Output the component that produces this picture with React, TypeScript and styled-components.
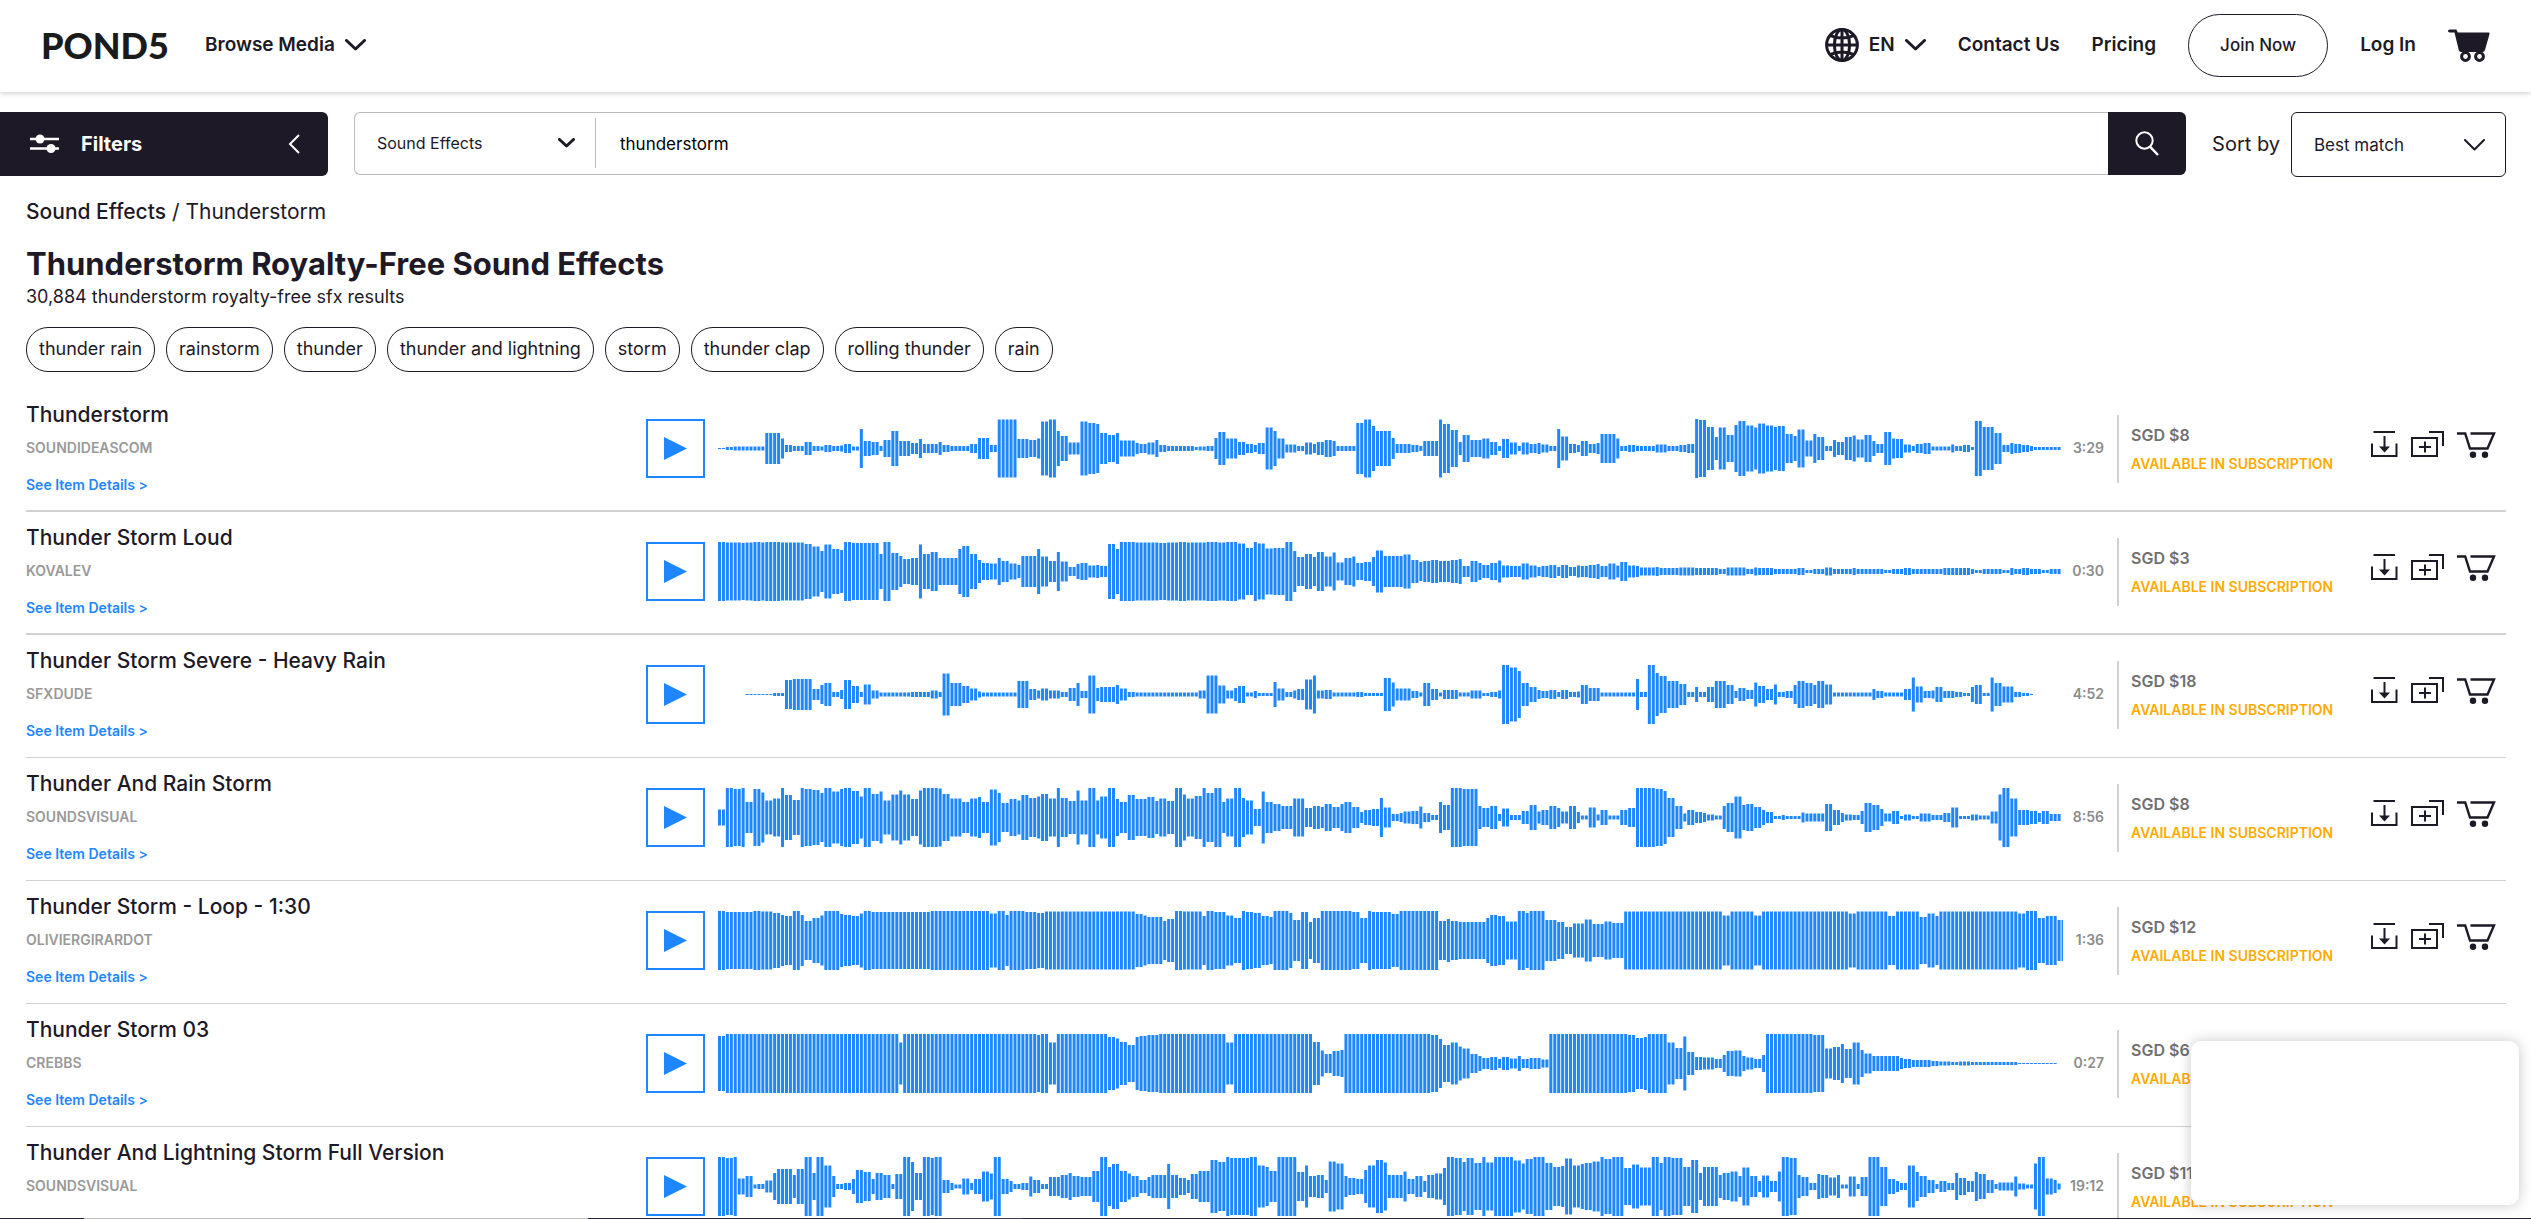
import React from "react";
import styled, { createGlobalStyle } from "styled-components";

const ink = "#1d1926";
const blue = "#1e87ff";
const line = "#d1d1d1";

const GlobalStyle = createGlobalStyle`
  *, *::before, *::after { box-sizing: border-box; }
  body {
    margin: 0;
    background: #fff;
    color: ${ink};
    font-family: Inter, "Open Sans", sans-serif;
    font-size: 17px;
  }
  button, input, select { font: inherit; color: inherit; }
  a { color: inherit; text-decoration: none; }
  h1, h2, p, ul, ol { margin: 0; padding: 0; }
  ul, ol { list-style: none; }
`;

const Page = styled.div`
  height: 100vh;
  overflow-y: auto;
  scrollbar-width: none;
`;

/* Header */

const Header = styled.header`
  display: flex;
  align-items: center;
  justify-content: space-between;
  height: 92px;
  padding: 0 41px 2px;
  box-shadow: 0 1px 5px rgba(0, 0, 0, 0.22);
`;

const HeaderGroup = styled.nav`
  display: flex;
  align-items: center;
  gap: 32px;
`;

const Logo = styled.a`
  min-width: 132px;
  color: #1b1b1b;
  font-family: Lato, sans-serif;
  font-size: 36px;
  font-weight: 900;
  line-height: 40px;
`;

const PlainButton = styled.button`
  display: inline-flex;
  align-items: center;
  gap: 10px;
  padding: 0;
  border: 0;
  background: none;
  font-size: 19px;
  font-weight: 600;
  line-height: 24px;
  cursor: pointer;
`;

const HeaderLink = styled.a`
  font-size: 19px;
  font-weight: 600;
  line-height: 24px;
`;

const JoinButton = styled.button`
  width: 140px;
  height: 63px;
  border: 1px solid ${ink};
  border-radius: 32px;
  background: #fff;
  font-size: 17px;
  font-weight: 500;
  cursor: pointer;
`;

/* Search bar */

const Toolbar = styled.div`
  display: flex;
  align-items: flex-start;
  padding: 20px 25px 0 0;
`;

const FiltersButton = styled.button`
  display: flex;
  align-items: center;
  gap: 22px;
  width: 328px;
  height: 64px;
  margin-right: 26px;
  padding: 0 28px 0 30px;
  border: 0;
  border-radius: 0 6px 6px 0;
  background: ${ink};
  color: #fff;
  font-size: 20px;
  font-weight: 700;
  cursor: pointer;

  svg:last-child { margin-left: auto; }
`;

const SearchForm = styled.form`
  display: flex;
  flex: 1;
  height: 63px;
  border: 1px solid #bbb;
  border-right: 0;
  border-radius: 6px;
`;

const SelectBox = styled.div<{ $width: number; $outlined?: boolean }>`
  position: relative;
  width: ${(p) => p.$width}px;
  height: ${(p) => (p.$outlined ? "65px" : "50px")};
  margin-top: ${(p) => (p.$outlined ? 0 : 5)}px;
  border: ${(p) => (p.$outlined ? `1px solid ${ink}` : "0")};
  border-right: ${(p) => (p.$outlined ? `1px solid ${ink}` : "1px solid #bbb")};
  border-radius: ${(p) => (p.$outlined ? 6 : 0)}px;

  select {
    width: 100%;
    height: 100%;
    padding: 0 48px 0 22px;
    border: 0;
    background: transparent;
    font-size: ${(p) => (p.$outlined ? 17 : 16)}px;
    appearance: none;
  }

  svg {
    position: absolute;
    top: 50%;
    right: 20px;
    transform: translateY(-50%);
    pointer-events: none;
  }
`;

const SearchInput = styled.input`
  flex: 1;
  min-width: 0;
  padding: 0 24px;
  border: 0;
  background: transparent;
  color: #000;
  font-size: 17px;
  outline: none;
`;

const SearchButton = styled.button`
  display: flex;
  align-items: center;
  justify-content: center;
  width: 78px;
  margin: -1px 0;
  border: 0;
  border-radius: 0 6px 6px 0;
  background: ${ink};
  cursor: pointer;
`;

const SortLabel = styled.label`
  margin: 0 11px 0 26px;
  font-size: 20px;
  line-height: 65px;
`;

/* Page intro */

const Main = styled.main`
  padding: 0 25px 0 26px;
`;

const Breadcrumb = styled.nav`
  margin-top: 23px;
  font-size: 21px;
  line-height: 24px;

  a { font-weight: 500; }
`;

const Title = styled.h1`
  margin-top: 20px;
  font-size: 31px;
  font-weight: 700;
  line-height: 40px;
`;

const Count = styled.p`
  margin-top: 1px;
  font-size: 18px;
  line-height: 24px;
`;

const Tags = styled.ul`
  display: flex;
  gap: 11px;
  margin-top: 18px;
`;

const Tag = styled.a`
  display: block;
  height: 45px;
  padding: 0 12px;
  border: 1px solid ${ink};
  border-radius: 22px;
  font-size: 18px;
  line-height: 42px;
`;

/* Results */

const Results = styled.ol`
  margin-top: 17px;
`;

const Row = styled.li<{ $thick: boolean }>`
  display: flex;
  height: 123px;
  border-bottom: ${(p) => (p.$thick ? 2 : 1)}px solid ${line};
`;

const Info = styled.div`
  width: 25%;
  padding-top: 14px;
`;

const TrackTitle = styled.h2`
  font-size: 21px;
  font-weight: 500;
  line-height: 24px;
`;

const Author = styled.a`
  display: block;
  margin-top: 9px;
  color: #999;
  font-size: 14px;
  font-weight: 600;
  line-height: 24px;
`;

const Details = styled.a`
  display: block;
  margin-top: 13px;
  color: ${blue};
  font-size: 14px;
  font-weight: 600;
  line-height: 24px;
`;

const PlayButton = styled.button`
  display: flex;
  align-items: center;
  justify-content: center;
  width: 59px;
  height: 59px;
  margin: 30px 13px 0 0;
  padding: 0;
  border: 2px solid ${blue};
  background: #fff;
  cursor: pointer;
`;

const Wave = styled.svg`
  flex: 1;
  min-width: 0;
  height: 59px;
  margin-top: 30px;
  fill: ${blue};
`;

const Duration = styled.span`
  width: 41px;
  padding-top: 47px;
  color: #8c8c8c;
  font-size: 14px;
  font-weight: 600;
  line-height: 24px;
  text-align: right;
`;

const Price = styled.div`
  width: 254px;
  height: 68px;
  margin: 26px 0 0 13px;
  padding: 8px 0 0 12px;
  border-left: 2px solid ${line};
  color: #707070;
  font-size: 16px;
  font-weight: 600;
  line-height: 24px;
`;

const Subscription = styled.p`
  margin-top: 5px;
  color: #ffab00;
  font-size: 14px;
  font-weight: 600;
  line-height: 24px;
`;

const Actions = styled.div`
  display: flex;
  align-items: flex-start;
  gap: 13px;
  padding: 42px 10px 0 0;
`;

const IconButton = styled.button`
  display: flex;
  padding: 0;
  border: 0;
  background: none;
  cursor: pointer;
`;

/* Overlays */

const ChatCard = styled.aside`
  position: fixed;
  right: 12px;
  bottom: 14px;
  width: 328px;
  height: 164px;
  border-radius: 10px;
  background: #fff;
  box-shadow: 0 0 14px rgba(0, 0, 0, 0.22);
`;

const BottomEdge = styled.div`
  position: fixed;
  right: 0;
  bottom: 0;
  left: 0;
  height: 1px;
  background: linear-gradient(
    to right,
    #1f2347 84px,
    #bdbdbd 84px 588px,
    #1f2347 588px 938px,
    #3f4260 938px 1023px,
    #1f2347 1023px
  );
`;

/* Icons */

const Chevron = ({ width = 21, height = 12, stroke = 3 }: { width?: number; height?: number; stroke?: number }) => (
  <svg width={width} height={height} viewBox={`0 0 ${width} ${height}`} fill="none" aria-hidden="true">
    <path
      d={`M${stroke / 2} ${stroke / 2} L${width / 2} ${height - stroke / 2 - 0.5} L${width - stroke / 2} ${stroke / 2}`}
      stroke={ink}
      strokeWidth={stroke}
      strokeLinecap="round"
      strokeLinejoin="round"
    />
  </svg>
);

const GlobeIcon = () => (
  <svg width="34" height="34" viewBox="0 0 34 34" fill="none" stroke={ink} strokeWidth="3" aria-hidden="true">
    <circle cx="17" cy="17" r="15.4" />
    <ellipse cx="17" cy="17" rx="7.6" ry="15.4" />
    <path d="M17 1.5v31M1.5 17h31M5 7.400c7 3.600 17 3.600 24 0M5 26.600c7-3.600 17-3.600 24 0" />
  </svg>
);

const FullCartIcon = () => (
  <svg width="42" height="33" viewBox="0 0 42 33" fill={ink} aria-hidden="true">
    <path d="M1.5 0.5H8.4L9.8 3.6H40.5Q41.8 3.6 41.5 5L37 21Q36.500 23 34.500 23H13Q11.300 23 10.800 21.200L6.500 3.500H1.500Q0 3.400 0 2Q0 0.500 1.500 0.500Z" />
    <circle cx="17.500" cy="27.500" r="3.900" fill="#fff" stroke={ink} strokeWidth="3" />
    <circle cx="31.500" cy="27.500" r="3.900" fill="#fff" stroke={ink} strokeWidth="3" />
  </svg>
);

const SlidersIcon = () => (
  <svg width="29" height="20" viewBox="0 0 29 20" aria-hidden="true">
    <path d="M0 5h29M0 14.500h29" stroke="#fff" strokeWidth="2.400" />
    <circle cx="10" cy="5" r="4.500" fill="#fff" />
    <circle cx="21" cy="14.500" r="4.500" fill="#fff" />
  </svg>
);

const BackIcon = () => (
  <svg width="12" height="20" viewBox="0 0 12 20" fill="none" aria-hidden="true">
    <path d="M11 1L2 10l9 9" stroke="#fff" strokeWidth="2" />
  </svg>
);

const SearchIcon = () => (
  <svg width="24" height="25" viewBox="0 0 24 25" fill="none" stroke="#fff" strokeWidth="2" aria-hidden="true">
    <circle cx="9.500" cy="9.500" r="8.200" />
    <path d="M15.200 15.800L23 24" strokeWidth="2.400" />
  </svg>
);

const PlayIcon = () => (
  <svg width="23" height="23" viewBox="0 0 23 23" aria-hidden="true">
    <path d="M0 0L23 11.500L0 23Z" fill={blue} />
  </svg>
);

const DownloadIcon = () => (
  <svg width="27" height="27" viewBox="0 0 27 27" fill="none" stroke={ink} strokeWidth="2" aria-hidden="true">
    <path d="M2.500 1h21.500M1 12.500V25h24.500V12.500M13.500 5v12" />
    <path d="M8 15.500h11L13.500 21.500Z" fill={ink} stroke="none" />
  </svg>
);

const CollectionIcon = () => (
  <svg width="33" height="27" viewBox="0 0 33 27" fill="none" stroke={ink} strokeWidth="2" aria-hidden="true">
    <path d="M1 7h25v18H1ZM18 1h14v14M8 16h12M14 10.500v11" />
  </svg>
);

const CartIcon = () => (
  <svg width="39" height="27" viewBox="0 0 39 27" fill="none" stroke={ink} strokeWidth="2.400" aria-hidden="true">
    <path d="M0 2.500h8.200L13 17.500h17.500L37 2.500H13.500" />
    <circle cx="16" cy="23.800" r="3.200" fill={ink} stroke="none" />
    <circle cx="28" cy="23.800" r="3.200" fill={ink} stroke="none" />
  </svg>
);

/* Each wave is a list of bar heights; "31x4" is four bars of height 31. */

type Track = {
  title: string;
  author: string;
  duration: string;
  price: string;
  wave: string;
};

const tracks: Track[] = [
  {
    title: "Thunderstorm",
    author: "SOUNDIDEASCOM",
    duration: "3:29",
    price: "SGD $8",
    wave: `1x2 3x2 4x8 31x4 20 7x2 5x3 13x2 5x2 4 7x2 5x2 6 9x2 4x2 39 15x2 13x2 5 17x2 35x2 15x3 11x2 19 9x4 13 7x2 5x3 5x2
      9x2 21x3 7x2 58x5 19x3 17x2 20 54x2 58x2 35 25x2 12x3 54x2 51x2 49 31x2 27x2 31 16x4 11 9x2 12x2 17 7x2 5x3 5x4 3 4x2
      5x2 21 33x2 20x3 13x2 9x2 7 11x2 42x2 35 20x2 8x3 5x2 12x2 9 13x2 17x2 15 5x5 51x2 58x2
      45 35x4 21 9x4 7x2 5 15x4 58 49x2 37x2 13 27x2 17x3 20x2 13x2 5 19x2 12x2 5 12x2 9x2 11 8x2 5x2 39 24x2 9x2 7 15x2 9x2
      11 29x4 20 5x2 7x2 5x5 8x3 5x3 7x2 9x2 59 57x2 43x2 23 42x2 27x2 47 55x2 46x2 42 50x2 46x2 43 45x2 29x2 25 38x2 16x2 29
      23x2 5x2 17 13x2 23x2 26 18x2 27x2 15 9x2 33x2 20 19x2 8x2 5 9x2 11x2 4x5 8 5x2 7x2 3 55x2 43x3 31x2 7x2 11 9x2 7x2 5 3x7`,
  },
  {
    title: "Thunder Storm Loud",
    author: "KOVALEV",
    duration: "0:30",
    price: "SGD $3",
    wave: `59x2 58x4 57 58x2 59x2 58 59x4 58x6 55x2 50x2 41 54x2 45x2 43 59x2 57x7 35 59x2 37x2 31 25x2 27x2 54 35x2 39x2 27x5 45
      51x2 35x2 23 17x2 16x2 27 21x2 16x2 13 31x4 45 30x2 21x2 39 20x2 9x2 15 17x2 12x2 13 11x2 55x2 45 59x4 58x6 57x2 58x3
      59x2 58x5 59x3 58x2 59x3 56x2 47x2 59 56x2 46x2 47x3 59x2 41 29x2 35x2 29 39x2 30x2 38 18x2 27x2 30 17x2 19x2
      29 42x2 31x5 34x2 23x2 19 21x2 23x2 21x3 23x2 25 11x2 21x2 17 13x2 17x2 22 12x2 11x3 16x2 12x2 9 11x2 13x2 9 13x2 9x2 12
      11x2 13x2 15 11x2 16x2 12 19x2 12x2 11 8x4 9 7x5 8x4 7x6 5x2 8x2 8x3 5x2 8 7x4 5x6 7x2 3x2 5x3 8x2 5x5 7 5x7 3x2 5x3 7x2
      5x8 7x7 5 3x2 5x5 3x2 7 5x2 7x2 5x3 3x2 5x3`,
  },
  {
    title: "Thunder Storm Severe - Heavy Rain",
    author: "SFXDUDE",
    duration: "4:52",
    price: "SGD $18",
    wave: `0x7 1x7 3x3 29x2 31x5 11x2 19 23x2 5x2 9 29x2 17x2 5 20x2 8x2 4x8 5x5 8x2 5 42x2 23x3 17x2 12x2 6 4x9 27x3 11x2 8 12x2
      8x3 5x2 13x2 23 7x2 38x2 13 15x4 19 12x2 5x2 4x8 4x8 8x2 38x3 18x2 8x2 13 17x2 4x2 7 3x4 25 12x2 5x2 8 11x2 30x2 38 8x2
      9x2 4x6 5x2 3x2
      3x3 33x2 24 12x4 7x2 4 23x2 11x2 4 9x4 4x3 8x3 3x2 5x2 8 59x2 54x2 47 23x2 15x2 9 7x2 9x2 5 9x2 5x2 6 19x2 13x3 4x4 4x5
      31 5x2 59x2 43 37x2 27x3 21x2 5x2 15 5x2 15x2 27x3 19x2 7 13x2 9x2 24 17x2 11x2 20 5x2 7x2 19 27x2 23x2 19 27x2 20x2
      4x10 11 7x2 4x5 11x2 34 16x2 7x2 8 15x2 7x3 5x2 3x2 15 19x2 3x2 34 23x2 16x3 5x2 3x2 1`,
  },
  {
    title: "Thunder And Rain Storm",
    author: "SOUNDSVISUAL",
    duration: "8:56",
    price: "SGD $8",
    wave: `16x2 59x2 57x2 59 31x2 57x2 50 34x2 38x2 59 45x2 35x2 59 57x2 55x2 49 59x2 52x2 57 59x2 53x2 42 59x2 47x2 52 34x2 46x2
      54 46x2 37x2 54 59x4 58 47x2 38x3 31x2 38x2 41 31x2 56x2 49 29x2 37x2 34 45x2 39x2 42 47x2 38x2 59 39x2 33x2 54 34x2
      59x2 34 42x2 59x2 37 31x2 45x2 37x3 41x2 33 38x2 33x2 59x2 46 38x2 43x2 59 49x2 59x2 31 38x2 59x2 39 34x2 17x2 52 31x2
      27x2 23x3 38x3 19x2 23x2 21 27x2 21x2 27 31x2 21x2 11 15x2
      17x2 39 20x2 7x2 9 12x2 13x2 22 9x2 5x2 31 25x2 59x3 57x4 23 19x2 23x2 7 18x2 5x3 13x2 25x2 12 15x2 23x2 19 12x2 23x2 11
      4x2 20x2 6 15x2 4x3 15x2 19x2 59x5 57x2 53 39x2 23x2 8 15x2 11x2 9 6x2 4x2 23 29x2 42x2 25 27x2 21x2 15 11x2 3x2 5 3x4
      10 8x5 27x2 15x2 9 6x2 5x2 13 29x2 25x2 17 8x2 13x2 3 6x2 3x2 8x3 5x3 9x2 20x2 3x3 6x2 4x3 12x2 46 59x2 38x2 15x3 13x2 9
      13x2 7x3`,
  },
  {
    title: "Thunder Storm - Loop - 1:30",
    author: "OLIVIERGIRARDOT",
    duration: "1:36",
    price: "SGD $12",
    wave: `59x2 57x7 59x2 58x3 55x2 51 49x2 59x2 51 39x2 45x2 50 59x4 53 51x2 49x2 54 59x2 57x15 59x15 54x2 59x2 51 59x4 57x3 55x2
      58x23 53x2 50 47x4 39 43x2 59x2 58x3 58x2 49 59x2 57x3 50x2 45x2 59 57x2 55x2 49x2 47 59x4 55 41x2 57x2 37 45x2 59x8
      57x2 45x2 59
      57x5 53x2 59x10 39x2 43 39x2 37x7 45 51x2 49x2 38x3 59x2 55 59x4 41x3 37x2 27x2 34x3 42x2 33x3 38x2 35x3 58x25 50x2 58x6
      50x2 58x22 54x2 58x8 49x2 58x6 47x2 54x2 49 58x20 54x2 59x3 45x2 49x3 41x2`,
  },
  {
    title: "Thunder Storm 03",
    author: "CREBBS",
    duration: "0:27",
    price: "SGD $6",
    wave: `55x2 59x44 42 59x34 57 59x2 42x2 59x13 53x2 50 43x2 37x2 53 55x2 57x3 59x17 42x2 59x20 43x2 26 19x2 25x2 27 59x7
      59x15 57x2 49 37x2 42x2 34 30x2 19x2 15 11x2 13x2 9 13x2 10x2 15 9x2 11x3 8x2 59x20 57x2 51x2 53 59x5 42x2 31x2 54 23x2
      13x2 12x3 9x2 17 25x2 26x2 15 12x2 9x2 17 59x12 57x3 30x2 33x2 39 29x2 42x2 27 20x2 15x7 11 9x2 7x5 5x2 4x3 3x2 4x3 3x12
      1x10`,
  },
  {
    title: "Thunder And Lightning Storm Full Version",
    author: "SOUNDSVISUAL",
    duration: "19:12",
    price: "SGD $11",
    wave: `59x2 57x2 59 16x2 21x2 4 5x2 12x2 27 35x4 23 35x2 59x2 27 59x2 42x2 21 5x2 7x2 15 33x2 29x2 15 27x2 23x2 5 25x2 59x2 49
      27x2 59x2 57 59x2 13x2 7 4x2 16x2 7 15x2 30x2 26 59x2 15x2 11 5x2 7x2 20 13x2 5x2 19x3 23x2 27 21x2 19x3 31x2 59x2 39
      45x2 31x2 26 21x2 13x2 19 23x4 45 23x2 17x2 13 25x2 31x3 53x2 49x2 59 57x5 59x2 42x2 39 31x2 59x5 29x2 42 21x2 23x2 13
      50x2 46x2 21 17x2 15x2 33 42
      42 53x2 48 23x4 30 15x2 21x2 11 23x2 26x2 37 59x2 57x2 49 57x2 47x2 59 48x2 59x5 52x2 46 55x2 59x3 47x2 39x2 41 56x2
      42x2 45 47x2 50x2 59 55x2 59x3 37x2 44x2 38x3 59x2 47 59x2 57x3 39x2 53x2 27 39x4 23 27x2 30x2 21 38x2 21x2 11 22x2 11x2
      30 59x2 57x2 23 19x2 7x2 25 23x2 18x2 23 4x2 20x2 5 19x2 59x3 39x2 15x2 11 7x2 42x2 29 21x2 13x2 5 11x2 7x2 27 17x2 11x2
      29 25x2 13x2 5 8x4 20 6x2 4x2 46 59x2 16x2 13 6`,
  },
];

const tags = [
  "thunder rain",
  "rainstorm",
  "thunder",
  "thunder and lightning",
  "storm",
  "thunder clap",
  "rolling thunder",
  "rain",
];

const expand = (wave: string): number[] =>
  wave
    .trim()
    .split(/\s+/)
    .flatMap((run) => {
      const [height, count = "1"] = run.split("x");
      return Array<number>(Number(count)).fill(Number(height));
    });

const PITCH = 3.94;

const Waveform = ({ wave }: { wave: string }) => (
  <Wave viewBox="0 0 1345 59" preserveAspectRatio="none" aria-hidden="true">
    {expand(wave).map((height, i) =>
      height ? <rect key={i} x={i * PITCH} y={(59 - height) / 2} width="3" height={height} /> : null
    )}
  </Wave>
);

const TrackRow = ({ track, thick, withDetails }: { track: Track; thick: boolean; withDetails: boolean }) => (
  <Row $thick={thick}>
    <Info>
      <TrackTitle>{track.title}</TrackTitle>
      <Author href="#">{track.author}</Author>
      {withDetails && <Details href="#">See Item Details &gt;</Details>}
    </Info>
    <PlayButton type="button" aria-label={`Play ${track.title}`}>
      <PlayIcon />
    </PlayButton>
    <Waveform wave={track.wave} />
    <Duration>{track.duration}</Duration>
    <Price>
      {track.price}
      <Subscription>AVAILABLE IN SUBSCRIPTION</Subscription>
    </Price>
    <Actions>
      <IconButton type="button" aria-label="Download preview">
        <DownloadIcon />
      </IconButton>
      <IconButton type="button" aria-label="Add to collection">
        <CollectionIcon />
      </IconButton>
      <IconButton type="button" aria-label="Add to cart">
        <CartIcon />
      </IconButton>
    </Actions>
  </Row>
);

export default function App() {
  return (
    <Page>
      <GlobalStyle />
      <Header>
        <HeaderGroup>
          <Logo href="#">POND5</Logo>
          <PlainButton type="button">
            Browse Media
            <Chevron />
          </PlainButton>
        </HeaderGroup>
        <HeaderGroup>
          <PlainButton type="button">
            <GlobeIcon />
            EN
            <Chevron />
          </PlainButton>
          <HeaderLink href="#">Contact Us</HeaderLink>
          <HeaderLink href="#">Pricing</HeaderLink>
          <JoinButton type="button">Join Now</JoinButton>
          <HeaderLink href="#">Log In</HeaderLink>
          <IconButton type="button" aria-label="Cart">
            <FullCartIcon />
          </IconButton>
        </HeaderGroup>
      </Header>

      <Toolbar>
        <FiltersButton type="button">
          <SlidersIcon />
          Filters
          <BackIcon />
        </FiltersButton>
        <SearchForm onSubmit={(e) => e.preventDefault()}>
          <SelectBox $width={241}>
            <select aria-label="Media type" defaultValue="Sound Effects">
              <option>Sound Effects</option>
            </select>
            <Chevron width={17} height={10} />
          </SelectBox>
          <SearchInput aria-label="Search" defaultValue="thunderstorm" />
          <SearchButton type="submit" aria-label="Search">
            <SearchIcon />
          </SearchButton>
        </SearchForm>
        <SortLabel htmlFor="sort">Sort by</SortLabel>
        <SelectBox $width={215} $outlined>
          <select id="sort" defaultValue="Best match">
            <option>Best match</option>
          </select>
          <Chevron stroke={2} />
        </SelectBox>
      </Toolbar>

      <Main>
        <Breadcrumb aria-label="Breadcrumb">
          <a href="#">Sound Effects</a> / Thunderstorm
        </Breadcrumb>
        <Title>Thunderstorm Royalty-Free Sound Effects</Title>
        <Count>30,884 thunderstorm royalty-free sfx results</Count>
        <Tags>
          {tags.map((tag) => (
            <li key={tag}>
              <Tag href="#">{tag}</Tag>
            </li>
          ))}
        </Tags>
        <Results>
          {tracks.map((track, i) => (
            <TrackRow
              key={track.title}
              track={track}
              thick={i < 2}
              withDetails={i < tracks.length - 1}
            />
          ))}
        </Results>
      </Main>

      <ChatCard />
      <BottomEdge />
    </Page>
  );
}
